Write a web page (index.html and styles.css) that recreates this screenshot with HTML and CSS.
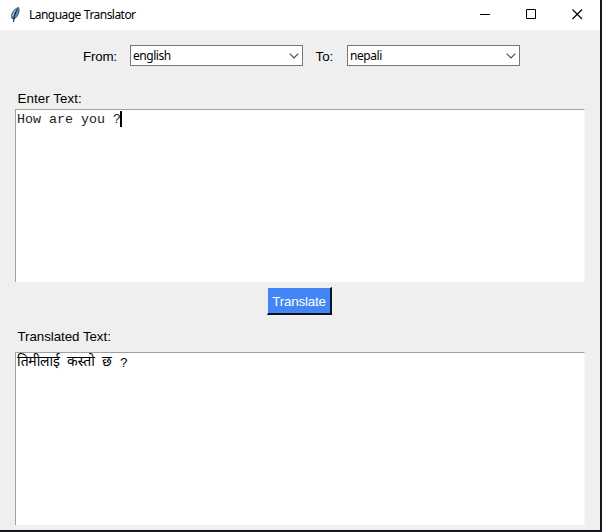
FILE: index.html
```html
<!DOCTYPE html>
<html lang="en">
<head>
<meta charset="utf-8">
<title>Language Translator</title>
<link rel="stylesheet" href="styles.css">
</head>
<body>
<div class="window">
  <header class="titlebar">
    <svg class="feather" width="12" height="18" viewBox="0 0 12 18">
      <path d="M3 12.500C1.500 8.500 4.500 3 9.500 1.500C11 4.500 9.500 10 5.500 12.800Z" fill="#6390c0" stroke="#2c4560" stroke-width=".9"/>
      <path d="M8.500 3C6.500 6 5 9.500 4.500 16" fill="none" stroke="#16202c" stroke-width="1.100"/>
      <path d="M7.500 3.500C5.500 5 4.200 7.500 4 10" fill="none" stroke="#a9cbea" stroke-width="1"/>
    </svg>
    <h1 class="title">Language Translator</h1>
    <div class="controls">
      <svg width="11" height="11" viewBox="0 0 11 11"><path d="M0 5.500H10" stroke="#000"/></svg>
      <svg width="11" height="11" viewBox="0 0 11 11"><path d="M.5 .5H9.500V9.500H.5Z" fill="none" stroke="#000"/></svg>
      <svg width="11" height="11" viewBox="0 0 11 11"><path d="M.5 .5L10 10M10 .5L.5 10" stroke="#000" stroke-width="1.200"/></svg>
    </div>
  </header>
  <main class="content">
    <div class="languages">
      <span class="label from">From:</span>
      <div class="combo"><span>english</span><svg width="10" height="6" viewBox="0 0 10 6"><path d="M.7 .7L5 5L9.300 .7" fill="none" stroke="#444" stroke-width="1.100"/></svg></div>
      <span class="label to">To:</span>
      <div class="combo"><span>nepali</span><svg width="10" height="6" viewBox="0 0 10 6"><path d="M.7 .7L5 5L9.300 .7" fill="none" stroke="#444" stroke-width="1.100"/></svg></div>
    </div>
    <div class="label enter">Enter Text:</div>
    <div class="textbox source"><span>How are you ?</span><i class="caret"></i></div>
    <button class="translate">Translate</button>
    <div class="label translated">Translated Text:</div>
    <div class="textbox result" lang="ne"><span class="word first">तिमीलाई</span><span class="word second">कस्तो</span><span class="word third">छ</span><span class="mark">?</span></div>
  </main>
</div>
</body>
</html>
```
FILE: styles.css
```css
* { box-sizing: border-box; }
body { margin: 0; width: 602px; height: 532px; overflow: hidden; background: #15161a; color: #000; }
.window { width: 600px; height: 530px; background: #efefef; overflow: hidden; }
.titlebar { display: flex; align-items: center; height: 30px; padding: 0 17px 0 9px; background: #fff; }
.feather { margin-top: -1px; }
.title { margin: 0 0 0 8px; font: 12px/16px "Noto Sans", sans-serif; letter-spacing: -.54px; word-spacing: .5px; white-space: nowrap; }
.controls { display: flex; gap: 35px; margin: -2px 0 0 auto; }
.controls svg, .combo svg { display: block; }
.content { display: flex; flex-direction: column; align-items: flex-start; padding: 15px 15px 0; }
.languages { display: flex; align-items: center; height: 21px; padding-left: 68px; }
.label { font: 13.33px/16px "Liberation Sans", Arial, sans-serif; white-space: nowrap; }
.from { width: 47px; padding-top: 2px; letter-spacing: -.2px; }
.to { width: 44px; padding: 2px 0 0 12.500px; }
.combo { display: flex; align-items: center; justify-content: space-between; width: 173px; height: 21px; padding: 0 3px 0 2px; border: 1px solid #777; background: #fff; font: 12px/16px "Noto Sans", sans-serif; letter-spacing: -.45px; }
.enter { margin: 25px 0 2px 2.500px; letter-spacing: .08px; }
.textbox { display: flex; align-items: flex-start; width: 570px; height: 173px; border: solid #a0a0a0; border-width: 1px 0 0 1px; border-right: 1px solid #f7f7f7; background: #fff; overflow: hidden; }
.source { padding: 1px 1px; font: 13.33px/17px "Liberation Mono", monospace; color: #222; white-space: pre; }
.caret { width: 2px; height: 16px; margin-left: -1px; background: #000; }
.translate { align-self: center; width: 65px; height: 28px; margin: 5px 0 0 -1px; padding: 2px 0 0; border: solid; border-width: 1px 2px 2px 1px; border-color: #e8efff #0a1020 #0a1020 #e8efff; background: #4285f4; color: #fff; font: 13.33px/20px "Liberation Sans", Arial, sans-serif; letter-spacing: -.15px; }
.translated { margin: 14px 0 7px 2.500px; letter-spacing: -.05px; }
.result { font: 14px/16px "Noto Sans", "Noto Sans Devanagari", sans-serif; }
.word { white-space: nowrap; }
.first { width: 51px; padding-left: 1px; letter-spacing: -.25px; }
.second { width: 35px; }
.third { width: 18px; }
.mark { font: 13.33px/21px "Liberation Mono", monospace; }
```
